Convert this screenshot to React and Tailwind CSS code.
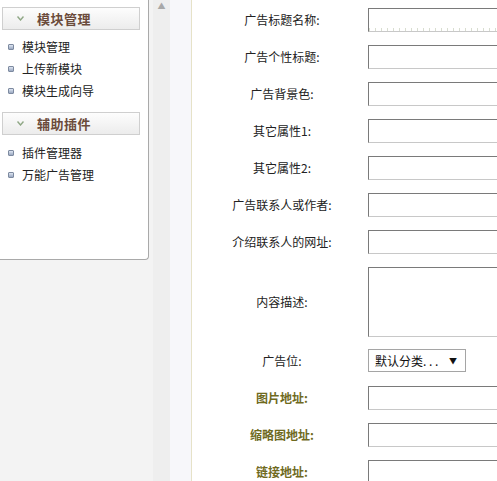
const font = { fontFamily: '"Noto Sans CJK SC", "Noto Sans", sans-serif' };

function SideHeader({ title }) {
  return (
    <div className="mx-[2px] w-[138px] h-[23px] border border-[#cfcfcf] bg-gradient-to-b from-[#fdfdfd] to-[#ececec] flex items-center">
      <span className="w-[34px] flex justify-center">
        <svg width="7" height="5" viewBox="0 0 7 5">
          <path d="M0.5 0.5 L3.5 4 L6.5 0.5" fill="none" stroke="#8fa785" strokeWidth="1.4" />
        </svg>
      </span>
      <span className="text-[13px] font-bold text-[#6b4b3b] tracking-[0.5px]">{title}</span>
    </div>
  );
}

function SideItem({ text }) {
  return (
    <div className="h-[22px] flex items-center pl-[8px]">
      <span className="w-[6px] h-[6px] rounded-[1px] border border-[#7d8aa0] bg-gradient-to-b from-[#dfe6f2] to-[#9aa8c0] mr-[8px]" />
      <span className="text-[12px] text-[#222]">{text}</span>
    </div>
  );
}

function Row({ label, accent, children, h = "h-[24px]", mb = "mb-[13px]" }) {
  return (
    <div className={`flex items-center ${h} ${mb}`}>
      <div
        className={`w-[176px] pl-[4px] text-center text-[12px] ${
          accent ? "font-bold text-[#6f6a1e]" : "text-[#222]"
        }`}
      >
        {label}
      </div>
      {children}
    </div>
  );
}

function TextBox() {
  return (
    <div className="w-[160px] h-[24px] border border-t-[#7a7a7a] border-l-[#7a7a7a] border-b-[#c8c8c8] border-r-[#c8c8c8] bg-white" />
  );
}

export default function App() {
  const rows = [
    "广告个性标题:",
    "广告背景色:",
    "其它属性1:",
    "其它属性2:",
    "广告联系人或作者:",
    "介绍联系人的网址:",
  ];
  return (
    <div className="w-[497px] h-[481px] overflow-hidden flex bg-white" style={font}>
      <div className="w-[149px] shrink-0 bg-[#f3f3f3]">
        <div className="h-[260px] bg-white border-r border-b border-[#a9a9a9] rounded-br-[4px] pt-[7px]">
          <SideHeader title="模块管理" />
          <div className="pt-[6px]">
            <SideItem text="模块管理" />
            <SideItem text="上传新模块" />
            <SideItem text="模块生成向导" />
          </div>
          <div className="mt-[10px]">
            <SideHeader title="辅助插件" />
          </div>
          <div className="pt-[7px]">
            <SideItem text="插件管理器" />
            <SideItem text="万能广告管理" />
          </div>
        </div>
      </div>
      <div className="w-[4px] shrink-0 bg-[#f3f3f3]" />
      <div className="w-[17px] shrink-0 bg-[#eeeeee] flex justify-center pt-[2px]">
        <span className="text-[8px] text-[#a8a8a8] leading-none">▲</span>
      </div>
      <div className="w-[21px] shrink-0 bg-[#f7f7fa]" />
      <div className="w-[1px] shrink-0 bg-[#e6e2c8]" />
      <div className="flex-1 pt-[8px]">
        <Row label="广告标题名称:">
          <div className="w-[160px] h-[24px] border border-t-[#7a7a7a] border-l-[#7a7a7a] border-b-[#c8c8c8] border-r-[#c8c8c8] bg-white flex items-end">
            <div className="w-full h-[3px] bg-[repeating-linear-gradient(90deg,#d8ddd0_0,#d8ddd0_1px,transparent_1px,transparent_6px)]" />
          </div>
        </Row>
        {rows.map((r) => (
          <Row key={r} label={r}>
            <TextBox />
          </Row>
        ))}
        <Row label="内容描述:" h="h-[70px]" mb="mb-[12px]">
          <div className="w-[160px] h-[70px] border border-t-[#7a7a7a] border-l-[#7a7a7a] border-b-[#c8c8c8] border-r-[#c8c8c8] bg-white" />
        </Row>
        <Row label="广告位:" h="h-[23px]" mb="mb-[14px]">
          <div className="w-[98px] h-[23px] border border-[#a5a5a5] bg-white flex items-center justify-between pl-[6px] pr-[8px] text-[12px] text-[#111]">
            <span>默认分类. . .</span>
            <span className="text-[8px]">▼</span>
          </div>
        </Row>
        <Row label="图片地址:" accent>
          <TextBox />
        </Row>
        <Row label="缩略图地址:" accent>
          <TextBox />
        </Row>
        <Row label="链接地址:" accent>
          <TextBox />
        </Row>
      </div>
    </div>
  );
}
